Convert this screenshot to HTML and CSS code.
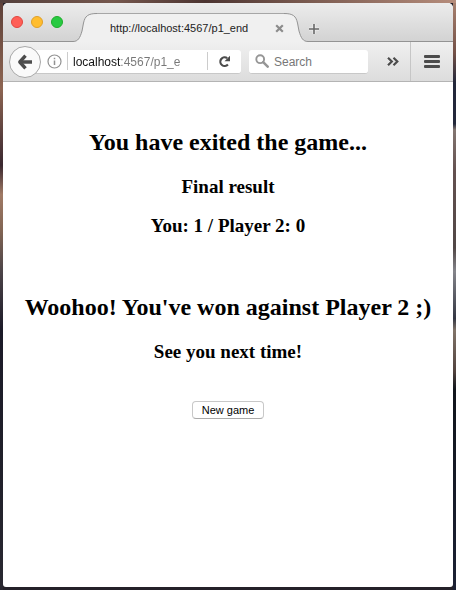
FILE: index.html
```html
<!DOCTYPE html>
<html lang="en">
<head>
<meta charset="utf-8">
<title>http://localhost:4567/p1_end</title>
<link rel="stylesheet" href="styles.css">
</head>
<body>
<div class="window">
  <header class="tabs">
    <div class="lights">
      <button class="light close" aria-label="Close window"></button>
      <button class="light minimise" aria-label="Minimise window"></button>
      <button class="light expand" aria-label="Zoom window"></button>
    </div>
    <div class="tab">
      <svg class="tab-edge" viewBox="0 0 24 29" aria-hidden="true">
        <path class="edge-fill" d="M0 29V28.500C5 28.500 7 25 9 18L10.500 10C12 3 15 .500 24 .500V29Z"/>
        <path class="edge-line" d="M0 28.500C5 28.500 7 25 9 18L10.500 10C12 3 15 .500 24 .500"/>
      </svg>
      <div class="tab-body">
        <span class="tab-title">http://localhost:4567/p1_end</span>
        <button class="bare tab-close" aria-label="Close tab">
          <svg width="9" height="9" viewBox="0 0 9 9"><path d="M1.200 1.200L7.800 7.800M7.800 1.200L1.200 7.800" stroke="#8c8c8c" stroke-width="2.200"/></svg>
        </button>
      </div>
      <svg class="tab-edge" viewBox="0 0 24 29" aria-hidden="true">
        <path class="edge-fill" d="M24 29V28.500C19 28.500 17 25 15 18L13.500 10C12 3 9 .500 0 .500V29Z"/>
        <path class="edge-line" d="M24 28.500C19 28.500 17 25 15 18L13.500 10C12 3 9 .500 0 .500"/>
      </svg>
    </div>
    <button class="bare new-tab" aria-label="New tab">
      <svg width="12" height="12" viewBox="0 0 12 12"><path d="M6 1V11M1 6H11" stroke="#fff" stroke-opacity=".6" stroke-width="3"/><path d="M6 1V11M1 6H11" stroke="#666" stroke-width="1.600"/></svg>
    </button>
  </header>
  <nav class="toolbar">
    <button class="back" aria-label="Back">
      <svg width="16" height="16" viewBox="0 0 16 16" fill="none" stroke="#4c4c4c" stroke-width="3.400"><path d="M8.500 1.700L2.800 8L8.500 14.300" stroke-linejoin="round"/><path d="M3 8H15"/></svg>
    </button>
    <div class="address">
      <svg class="info" width="15" height="15" viewBox="0 0 15 15" fill="none" stroke="#929292"><circle cx="7.500" cy="7.500" r="6.500" stroke-width="1.200"/><path d="M7.500 6.500V11M7.500 3.700V5.200" stroke-width="1.500"/></svg>
      <input class="url" type="text" aria-label="Address" value="localhost:4567/p1_end">
      <button class="bare reload" aria-label="Reload">
        <svg width="13" height="13" viewBox="0 0 13 13"><path d="M9.900 9.500A4.300 4.300 0 1 1 9.200 3.200" fill="none" stroke="#4c4c4c" stroke-width="2.200"/><path d="M12 .800V6.300H6.500Z" fill="#4c4c4c"/></svg>
      </button>
    </div>
    <label class="search">
      <svg width="14" height="14" viewBox="0 0 14 14" fill="none" stroke="#969696"><circle cx="5.200" cy="5.200" r="3.900" stroke-width="1.900"/><path d="M8.200 8.200L12.700 12.700" stroke-width="2.500" stroke-linecap="round"/></svg>
      <input type="text" placeholder="Search" aria-label="Search">
    </label>
    <button class="bare more" aria-label="More tools">
      <svg width="12" height="9" viewBox="0 0 12 9" fill="none" stroke="#4c4c4c" stroke-width="2.200"><path d="M1 .800L4.800 4.500L1 8.200M6.500 .800L10.300 4.500L6.500 8.200"/></svg>
    </button>
    <button class="bare menu" aria-label="Open menu">
      <svg width="16" height="13" viewBox="0 0 16 13" fill="#4c4c4c"><rect width="16" height="3" rx="1"/><rect y="5" width="16" height="3" rx="1"/><rect y="10" width="16" height="3" rx="1"/></svg>
    </button>
  </nav>
  <main class="page">
    <section>
      <h2>You have exited the game...</h2>
      <h3>Final result</h3>
      <h3>You: 1 / Player 2: 0</h3>
    </section>
    <section>
      <h2>Woohoo! You've won against Player 2 ;)</h2>
      <h3>See you next time!</h3>
    </section>
    <button class="new-game">New game</button>
  </main>
</div>
</body>
</html>
```
FILE: styles.css
```css
* {
  box-sizing: border-box;
}

body {
  margin: 0;
  min-height: 100vh;
  padding: 3px;
  display: flex;
  font-family: "Liberation Sans", Arial, sans-serif;
  background:
    linear-gradient(90deg, #54403c, #75574d 25%, #4c3431 45%, #75564c 65%, #b68d7c) top / 100% 3px no-repeat,
    linear-gradient(#5d4038, #8d6552 15%, #3a2830 28%, #a07a65 33%, #826554 39%, #4c4448 46%, #1b1a28 56%, #20202a 80%, #292831) left / 3px 100% no-repeat,
    linear-gradient(#aa8371, #735047 9%, #23283b 14%, #23283b 21%, #837671 22%, #645150 29%, #514746 42%, #85858b 46%, #343743 54%, #817469 56%, #51423e 63%, #11151c 66%, #1c2134) right / 3px 100% no-repeat,
    #242129;
}

button,
input {
  margin: 0;
  padding: 0;
  font-family: inherit;
}

svg {
  display: block;
}

.window {
  flex: 1;
  min-width: 0;
  display: flex;
  flex-direction: column;
  overflow: hidden;
  border-radius: 5px 5px 3px 3px;
  background: #fff;
}

.bare {
  display: flex;
  align-items: center;
  justify-content: center;
  border: 0;
  background: none;
}

.tabs {
  height: 39px;
  display: flex;
  align-items: flex-end;
  background:
    linear-gradient(#939393, #939393) bottom / 100% 1px no-repeat,
    linear-gradient(#ececec, #d2d2d2);
}

.lights {
  display: flex;
  gap: 8px;
  padding: 0 10px 14px 8px;
}

.light {
  width: 12px;
  height: 12px;
  border: 1px solid;
  border-radius: 50%;
}

.close {
  background: #ff5f57;
  border-color: #e2463f;
}

.minimise {
  background: #ffbd2e;
  border-color: #e0a028;
}

.expand {
  background: #28ca42;
  border-color: #1dad2b;
}

.tab {
  flex: 0 1 235px;
  min-width: 0;
  height: 29px;
  display: flex;
}

.tab-edge {
  flex: none;
  width: 24px;
  height: 29px;
}

.edge-fill {
  fill: #f0f0f0;
}

.edge-line {
  fill: none;
  stroke: #939393;
}

.tab-body {
  flex: 1;
  min-width: 0;
  display: flex;
  align-items: center;
  justify-content: space-between;
  padding-left: 13px;
  border-top: 1px solid #a6a6a6;
  background: #f0f0f0;
}

.tab-title {
  overflow: hidden;
  white-space: nowrap;
  font-size: 11px;
  line-height: 16px;
  color: #222;
}

.new-tab {
  height: 26px;
  width: 12px;
}

.toolbar {
  height: 40px;
  display: flex;
  align-items: center;
  padding-left: 6px;
  border-bottom: 1px solid #b4b4b4;
  background: linear-gradient(#f0f0f0, #dcdcdc);
}

.back {
  position: relative;
  flex: none;
  width: 32px;
  height: 32px;
  display: flex;
  align-items: center;
  justify-content: center;
  border: 1px solid #a8a8a8;
  border-radius: 50%;
  background: #fafafa;
}

.address {
  flex: 1 1 208px;
  min-width: 0;
  height: 24px;
  display: flex;
  align-items: center;
  margin-left: -8px;
  padding-left: 14px;
  border-radius: 3px;
  border-bottom: 1px solid #c8c8c8;
  background: #fff;
}

.info {
  flex: none;
  margin-right: 5px;
}

.url {
  flex: 1;
  min-width: 0;
  height: 18px;
  border: 0;
  border-left: 1px solid #ccc;
  padding: 1px 0 0 5px;
  margin-right: 26px;
  font-size: 12px;
  color: transparent;
  background: linear-gradient(90deg, #111 53px, #777 53px);
  background-clip: text;
}

.reload {
  flex: none;
  width: 34px;
  height: 18px;
  border-left: 1px solid #ccc;
}

.search {
  flex: 0 1 119px;
  min-width: 0;
  height: 24px;
  display: flex;
  align-items: center;
  gap: 5px;
  margin-left: 8px;
  padding: 0 6px;
  border-radius: 3px;
  border-bottom: 1px solid #c8c8c8;
  background: #fff;
}

.search svg {
  flex: none;
}

.search input {
  flex: 1;
  min-width: 0;
  height: 18px;
  padding-top: 1px;
  border: 0;
  font-size: 12px;
  background: none;
}

.search input::placeholder {
  color: #777;
}

.more {
  flex: none;
  width: 42px;
  height: 39px;
  padding-left: 8px;
}

.menu {
  flex: none;
  width: 43px;
  height: 39px;
  border-left: 1px solid #c6c6c6;
}

.page {
  flex: 1;
  display: flex;
  flex-direction: column;
  align-items: center;
  padding: 46px 8px 8px;
  text-align: center;
  font-family: "Liberation Serif", "Times New Roman", serif;
  color: #000;
}

section {
  margin-bottom: 38px;
}

section:first-child {
  margin-bottom: 56px;
}

h2 {
  margin: 0 0 20px;
  font-size: 24px;
  line-height: 28px;
}

h3 {
  margin: 0;
  font-size: 19px;
  line-height: 22px;
}

h3 + h3 {
  margin-top: 17px;
}

.new-game {
  width: 72px;
  height: 18px;
  border: 1px solid #c8c8c8;
  border-bottom-color: #aaa;
  border-radius: 4px;
  background: #fff;
  font-family: "Liberation Sans", Arial, sans-serif;
  font-size: 11px;
  line-height: 16px;
  color: #000;
}
```
